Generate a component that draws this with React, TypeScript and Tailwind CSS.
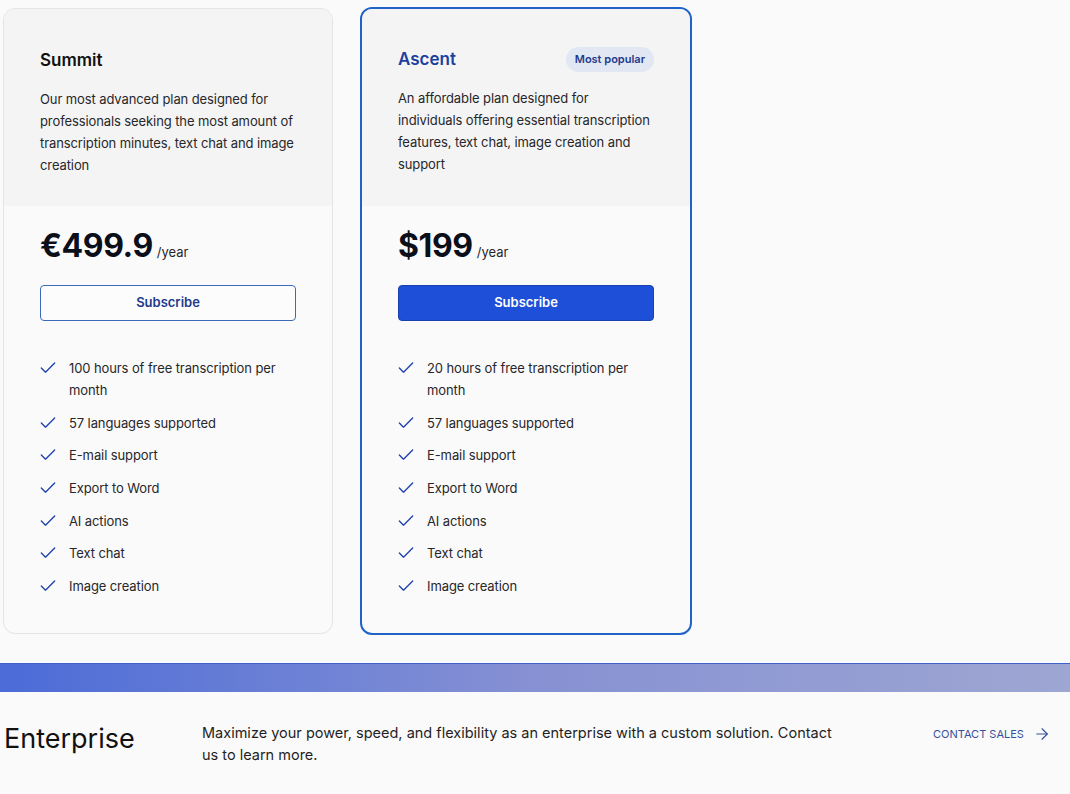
import React from "react";
import { Check, ArrowRight } from "lucide-react";

type Plan = {
  name: string;
  desc: string;
  price: string;
  popular?: boolean;
  features: string[];
};

const plans: Plan[] = [
  {
    name: "Summit",
    desc: "Our most advanced plan designed for professionals seeking the most amount of transcription minutes, text chat and image creation",
    price: "€499.9",
    features: [
      "100 hours of free transcription per month",
      "57 languages supported",
      "E-mail support",
      "Export to Word",
      "AI actions",
      "Text chat",
      "Image creation",
    ],
  },
  {
    name: "Ascent",
    desc: "An affordable plan designed for individuals offering essential transcription features, text chat, image creation and support",
    price: "$199",
    popular: true,
    features: [
      "20 hours of free transcription per month",
      "57 languages supported",
      "E-mail support",
      "Export to Word",
      "AI actions",
      "Text chat",
      "Image creation",
    ],
  },
];

function Card({ plan }: { plan: Plan }) {
  const pop = !!plan.popular;
  return (
    <div
      className={
        pop
          ? "w-[332px] h-[628px] rounded-[12px] border-2 border-[#1f63c9] overflow-hidden bg-[#fafafa] flex flex-col"
          : "w-[330px] h-[626px] mt-[1px] rounded-[12px] border border-[#e4e4e7] overflow-hidden bg-[#fafafa] flex flex-col"
      }
    >
      <div className={pop ? "bg-[#f4f4f5] px-9 pt-[38px] h-[197px]" : "bg-[#f4f4f5] px-9 pt-[39px] h-[197px]"}>
        <div className="flex items-center justify-between h-[24px]">
          <h3
            className={
              pop
                ? "text-[17px] leading-[24px] font-semibold text-[#1d3f9e]"
                : "text-[17px] leading-[24px] font-semibold text-[#111]"
            }
          >
            {plan.name}
          </h3>
          {pop && (
            <span className="h-[25px] px-[9px] rounded-full bg-[#e2e7f4] text-[11px] font-semibold text-[#1e3a8a] flex items-center">
              Most popular
            </span>
          )}
        </div>
        <p className="mt-[16px] text-[13px] leading-[22px] tracking-[-0.1px] text-[#27272a] pr-[2px]">{plan.desc}</p>
      </div>
      <div className="px-9 pt-[20px] flex flex-col">
        <div className="flex items-baseline h-[40px]">
          <span className="text-[32px] leading-[40px] font-bold tracking-[-0.4px] text-[#0b0f1a]">{plan.price}</span>
          <span className="ml-[4px] text-[13px] text-[#27272a]">/year</span>
        </div>
        <button
          className={
            pop
              ? "mt-[19px] h-[36px] w-full rounded-[4px] bg-[#1d4fd8] border border-[#1a3fae] text-white text-[13px] font-semibold"
              : "mt-[19px] h-[36px] w-full rounded-[4px] bg-[#fcfcfd] border border-[#3d6ab8] text-[#1e3a8a] text-[13px] font-semibold"
          }
        >
          Subscribe
        </button>
        <ul className="mt-[36px] flex flex-col gap-[10.7px]">
          {plan.features.map((f) => (
            <li key={f} className="flex items-start">
              <Check className="mt-[1px] ml-[-2px] w-[20px] h-[20px] shrink-0 text-[#1e40af]" strokeWidth={1.6} />
              <span className="ml-[11px] text-[13px] leading-[22px] tracking-[-0.1px] text-[#27272a] pr-[14px]">{f}</span>
            </li>
          ))}
        </ul>
      </div>
    </div>
  );
}

export default function App() {
  return (
    <div
      className="w-[1070px] h-[794px] overflow-hidden bg-[#fafafa]"
      style={{ fontFamily: "Inter, 'Noto Sans', sans-serif" }}
    >
      <div className="flex gap-[27px] pl-[3px] pt-[7px]">
        {plans.map((p) => (
          <Card key={p.name} plan={p} />
        ))}
      </div>
      <div className="mt-[28px] h-[29px] border-t border-[#3f5fc9] bg-gradient-to-r from-[#4c6bd7] via-[#8791d3] to-[#9ea6d2]" />
      <div className="flex items-start pt-[31px] pl-[4px]">
        <h2 className="w-[198px] text-[27px] leading-[32px] text-[#111]">Enterprise</h2>
        <p className="w-[640px] text-[14.5px] leading-[22px] text-[#1f1f23] mt-[-1px]">
          Maximize your power, speed, and flexibility as an enterprise with a custom solution. Contact us to learn more.
        </p>
        <a className="ml-[91px] flex items-center text-[11px] leading-[22px] text-[#34509c]">
          CONTACT SALES
          <ArrowRight className="ml-[9px] w-[18px] h-[18px] text-[#34509c]" strokeWidth={1.5} />
        </a>
      </div>
    </div>
  );
}
